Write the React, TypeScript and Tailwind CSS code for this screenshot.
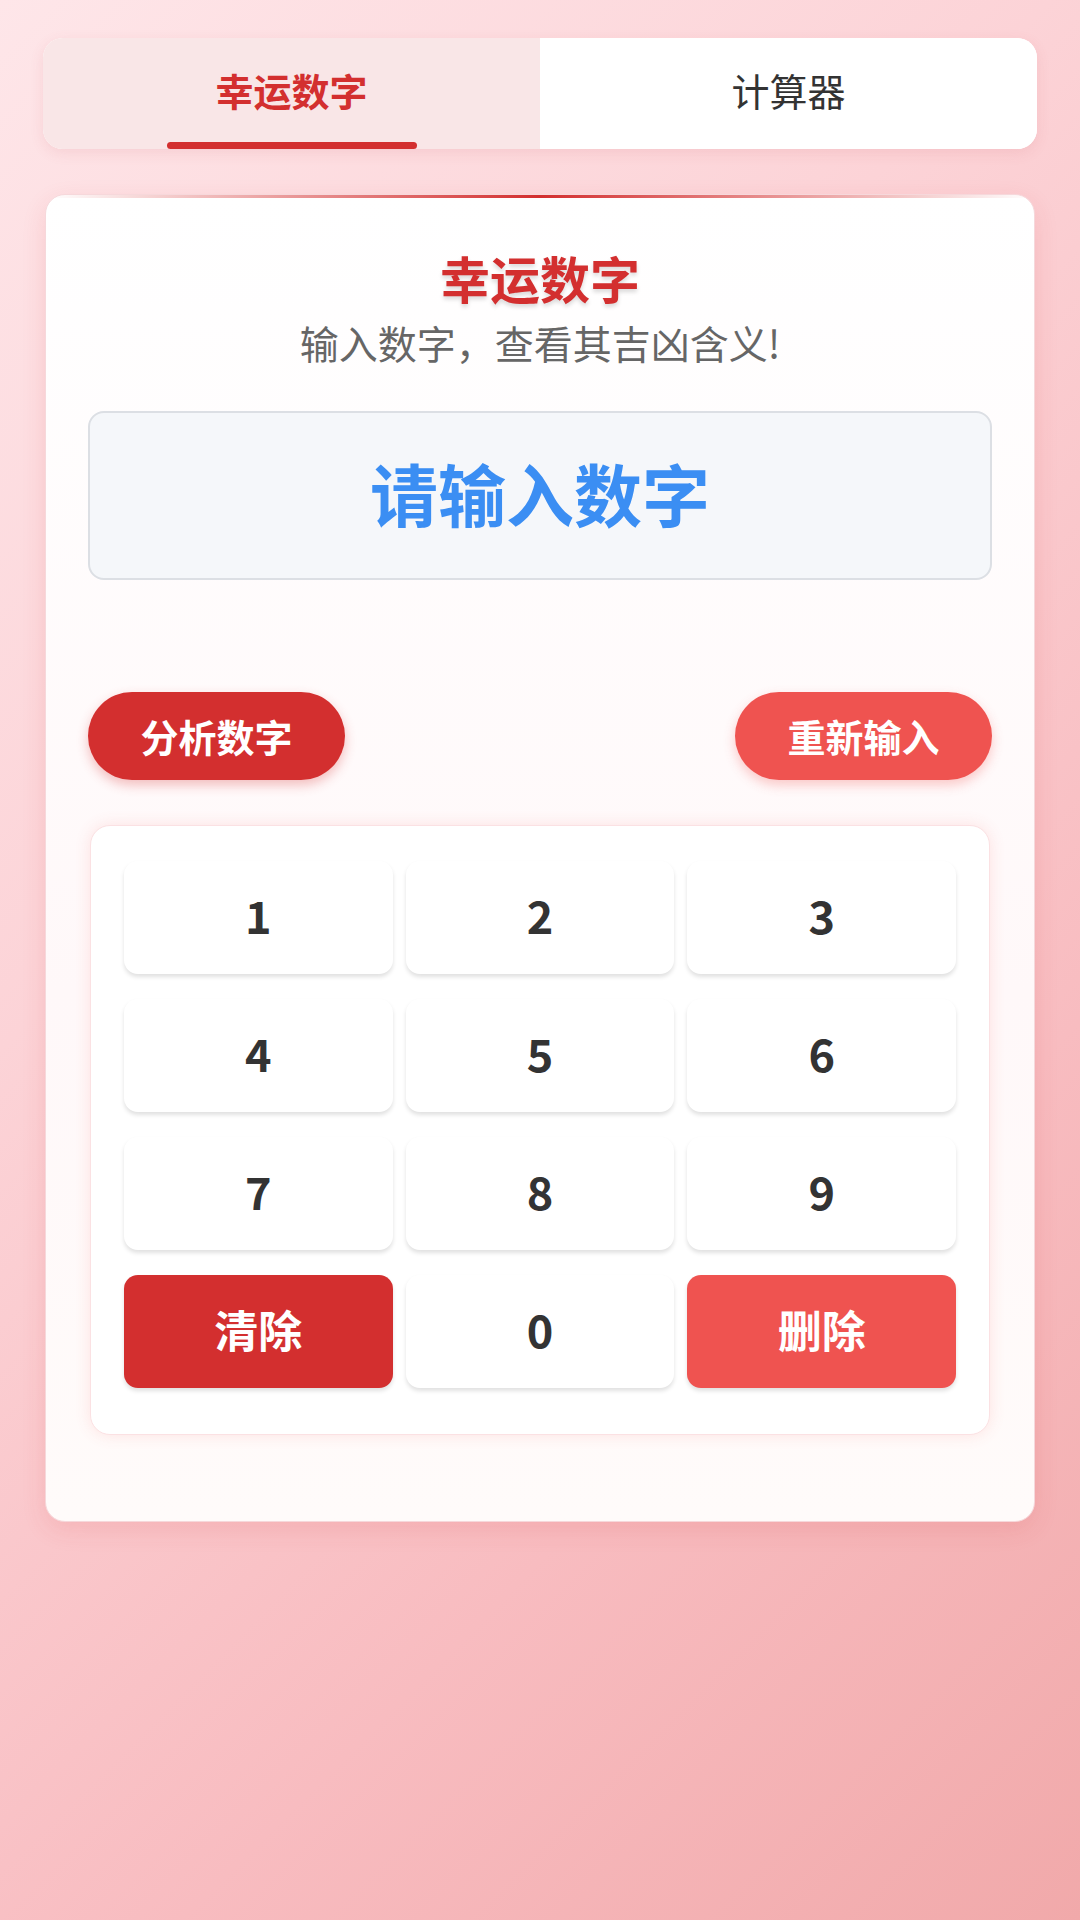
import React from "react";

const FONT = { fontFamily: '"Noto Sans CJK SC", "Noto Sans", sans-serif' };

export default function App() {
  const keys = ["1", "2", "3", "4", "5", "6", "7", "8", "9"];
  return (
    <div
      className="w-[1080px] min-h-[1920px] bg-[linear-gradient(135deg,#fee6e9_0%,#fcd3d7_35%,#f8bcc0_70%,#f1a9aa_100%)] px-[43px] pt-[38px]"
      style={FONT}
    >
      {/* Tabs */}
      <div className="flex h-[111px] overflow-hidden rounded-[20px] bg-white shadow-[0_4px_14px_rgba(200,80,90,0.12)]">
        <div className="relative flex flex-1 items-center justify-center bg-[#f9e6e7] pb-[8px]">
          <span className="text-[38px] font-bold text-[#d32f2f]">幸运数字</span>
          <div className="absolute bottom-0 left-1/2 h-[7px] w-[250px] -translate-x-1/2 rounded-full bg-[#d32f2f]" />
        </div>
        <div className="flex flex-1 items-center justify-center bg-white pb-[8px]">
          <span className="text-[38px] text-[#333333]">计算器</span>
        </div>
      </div>

      {/* Card */}
      <div className="relative mx-[2px] mt-[45px] overflow-hidden rounded-[20px] border border-[#f6d8db] bg-[linear-gradient(180deg,#ffffff_0%,#fff8f9_60%,#fffbfa_100%)] px-[42px] pb-[86px] pt-[50px] shadow-[0_8px_24px_rgba(211,47,47,0.12)]">
        <div className="absolute left-0 right-0 top-0 h-[3px] bg-[linear-gradient(90deg,rgba(211,47,47,0)_0%,#d32f2f_50%,rgba(211,47,47,0)_100%)]" />
        <div className="text-center text-[50px] font-bold leading-[1.3] text-[#d32f2f] [text-shadow:0_3px_4px_rgba(0,0,0,0.15)]">
          幸运数字
        </div>
        <div className="mt-[7px] text-center text-[39px] leading-[1.3] text-[#666666]">
          输入数字，查看其吉凶含义!
        </div>

        <div className="mt-[43px] flex h-[169px] items-center justify-center rounded-[16px] border-2 border-[#dcdfe4] bg-[#f5f7fa] pb-[4px]">
          <span className="text-[68px] font-bold text-[#3b8ef3]">请输入数字</span>
        </div>

        <div className="mt-[112px] flex items-center justify-between">
          <button className="flex h-[88px] w-[257px] items-center justify-center rounded-full bg-[#d32f2f] text-[38px] font-bold text-white shadow-[0_5px_12px_rgba(211,47,47,0.3)]">
            分析数字
          </button>
          <button className="flex h-[88px] w-[257px] items-center justify-center rounded-full bg-[#ef5350] text-[38px] font-bold text-white shadow-[0_5px_12px_rgba(239,83,80,0.3)]">
            重新输入
          </button>
        </div>

        <div className="mx-[2px] mt-[45px] rounded-[20px] border border-[#fbe1e3] bg-white px-[33px] pb-[46px] pt-[35px] shadow-[0_0_16px_rgba(239,83,80,0.14)]">
          <div className="grid grid-cols-3 gap-x-[13px] gap-y-[25px]">
            {keys.map((k) => (
              <div
                key={k}
                className="flex h-[113px] items-center justify-center rounded-[14px] bg-white pb-[4px] text-[45px] font-bold text-[#333333] shadow-[0_3px_4px_rgba(0,0,0,0.12)]"
              >
                {k}
              </div>
            ))}
            <div className="flex h-[113px] items-center justify-center rounded-[14px] bg-[#d32f2f] pb-[4px] text-[44px] font-bold text-white shadow-[0_3px_4px_rgba(0,0,0,0.12)]">
              清除
            </div>
            <div className="flex h-[113px] items-center justify-center rounded-[14px] bg-white pb-[4px] text-[45px] font-bold text-[#333333] shadow-[0_3px_4px_rgba(0,0,0,0.12)]">
              0
            </div>
            <div className="flex h-[113px] items-center justify-center rounded-[14px] bg-[#ef5350] pb-[4px] text-[44px] font-bold text-white shadow-[0_3px_4px_rgba(0,0,0,0.12)]">
              删除
            </div>
          </div>
        </div>
      </div>
    </div>
  );
}
